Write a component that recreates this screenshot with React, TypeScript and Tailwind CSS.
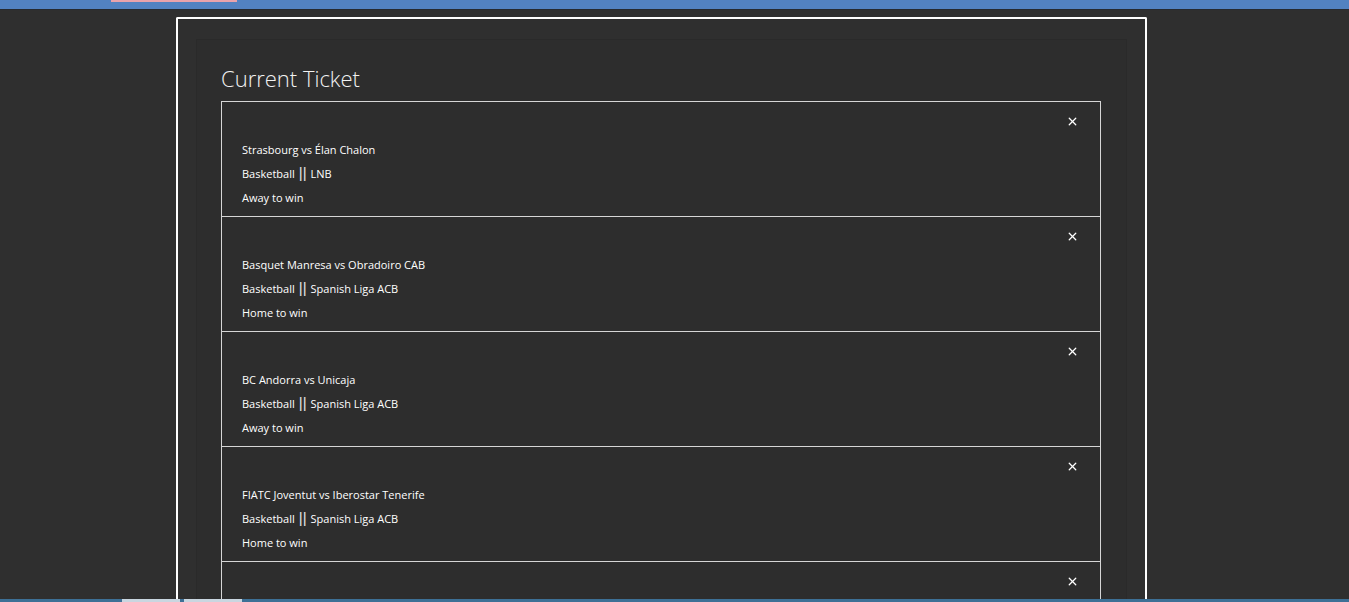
import { X } from "lucide-react";

interface TicketItem {
  match: string;
  sport: string;
  league: string;
  pick: string;
}

const items: TicketItem[] = [
  { match: "Strasbourg vs Élan Chalon", sport: "Basketball", league: "LNB", pick: "Away to win" },
  { match: "Basquet Manresa vs Obradoiro CAB", sport: "Basketball", league: "Spanish Liga ACB", pick: "Home to win" },
  { match: "BC Andorra vs Unicaja", sport: "Basketball", league: "Spanish Liga ACB", pick: "Away to win" },
  { match: "FIATC Joventut vs Iberostar Tenerife", sport: "Basketball", league: "Spanish Liga ACB", pick: "Home to win" },
];

function CloseRow() {
  return (
    <div className="h-9 pt-[3px] flex items-center justify-end">
      <button className="w-5 h-5 -mr-[2px] flex items-center justify-center text-white">
        <X className="w-[13px] h-[13px]" strokeWidth={2.4} />
      </button>
    </div>
  );
}

function TicketRow({ item }: { item: TicketItem }) {
  return (
    <li className="border border-[#d6d6d6] -mt-px first:mt-0 px-5 pb-1.5">
      <CloseRow />
      <p className="h-6 leading-6 text-[11px]">{item.match}</p>
      <p className="h-6 leading-6 text-[11px] flex items-center">
        {item.sport}
        <span
          className="ml-[4px] mr-[4px] -mt-[4px] text-[15px] leading-none text-[#e4e4e4]"
          style={{ fontFamily: '"Liberation Sans", sans-serif' }}
        >
          ||
        </span>
        {item.league}
      </p>
      <p className="h-6 leading-6 text-[11px]">{item.pick}</p>
    </li>
  );
}

export default function App() {
  return (
    <div
      className="h-[602px] overflow-hidden flex flex-col bg-[#2f2f2f] text-white"
      style={{ fontFamily: '"Open Sans", "Noto Sans", sans-serif' }}
    >
      <div className="h-[9px] bg-[#5282c1] relative shrink-0">
        <div className="absolute left-[111px] top-0 w-[126px] h-[2px] bg-[#e9a3ab]" />
      </div>
      <div className="h-px bg-[#262a30] shrink-0" />

      <main className="flex-1 overflow-hidden pt-[7px]">
        <div className="ml-[176px] w-[971px] h-full border-2 border-white border-b-0 rounded-t-[2px] px-[18px] pt-[20px]">
          <div className="h-full bg-[#2d2d2d] border border-[#2a2a2a] border-b-0 px-[24px] pt-[22px]">
            <h2 className="text-[22px] font-light leading-[32px] text-[#f2f2f2] mb-[7px]">Current Ticket</h2>
            <ul className="w-[880px]">
              {items.map((item) => (
                <TicketRow key={item.match} item={item} />
              ))}
              <li className="border border-[#d6d6d6] -mt-px px-5 h-[60px]">
                <CloseRow />
              </li>
            </ul>
          </div>
        </div>
      </main>

      <div className="h-[3px] shrink-0 bg-[#3d7096] flex">
        <div className="ml-[122px] w-[58px] bg-[#c9d6e0]" />
        <div className="ml-[4px] w-[58px] bg-[#c9d6e0]" />
      </div>
    </div>
  );
}
